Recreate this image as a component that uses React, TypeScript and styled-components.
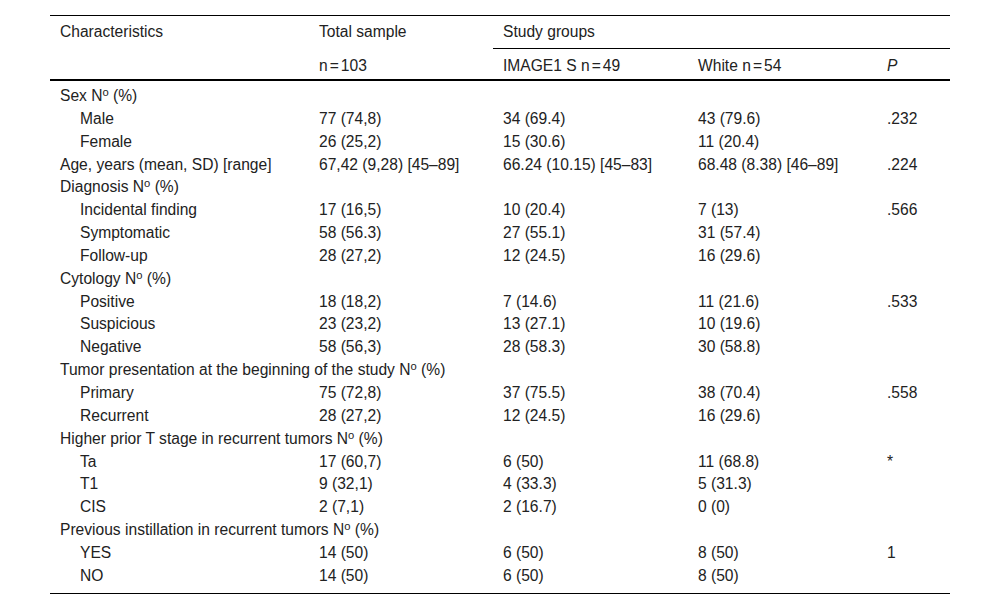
import React from "react";
import styled, { createGlobalStyle } from "styled-components";

// Page reset: white page, Arial-metric sans font
const GlobalStyle = createGlobalStyle`
  html, body {
    margin: 0;
    padding: 0;
    background: #ffffff;
  }
  body {
    font-family: "Liberation Sans", Arial, Helvetica, sans-serif;
    color: #222;
  }
`;

const Page = styled.div`
  padding: 15px 50px 0 50px;
`;

const Table = styled.table`
  width: 900px;
  border-collapse: collapse;
  table-layout: fixed;
  border-top: 1px solid #000;
  border-bottom: 1px solid #000;
  font-size: 15.6px;
  line-height: 19px;
`;

// Header cells
const Th = styled.th<{ $underline?: boolean; $italic?: boolean }>`
  text-align: left;
  font-weight: normal;
  font-style: ${(p) => (p.$italic ? "italic" : "normal")};
  padding: 6px 10px 7px 10px;
  white-space: nowrap;
  border-bottom: ${(p) => (p.$underline ? "1px solid #000" : "none")};
`;

const SubHeadRow = styled.tr`
  border-bottom: 2px solid #000;

  th {
    padding-top: 7px;
    padding-bottom: 4px;
  }
`;

const Body = styled.tbody`
  tr:first-child td {
    padding-top: 6px;
  }
  tr:last-child td {
    padding-bottom: 7px;
  }
`;

// Body cells, indented when the row is a sub-item of a group
const Td = styled.td<{ $indent?: boolean }>`
  padding: 2px 10px 2px ${(p) => (p.$indent ? "30px" : "10px")};
  line-height: 18.85px;
  white-space: nowrap;
  vertical-align: top;
`;

const Sup = styled.sup`
  font-size: 0.72em;
  line-height: 0;
  vertical-align: 0.45em;
`;

// tightly set equals sign in "n = 49"
const Eq = styled.span`
  padding: 0 2px;
`;

const No = () => (
  <>
    N<Sup>o</Sup>
  </>
);

const Count: React.FC<{ prefix?: string; n: number }> = ({ prefix = "", n }) => (
  <>
    {prefix}n<Eq>=</Eq>
    {n}
  </>
);

type Row =
  | { kind: "group"; label: React.ReactNode }
  | {
      kind: "item" | "plain";
      label: string;
      total: string;
      a: string;
      b: string;
      p?: string;
    };

const rows: Row[] = [
  { kind: "group", label: <>Sex <No /> (%)</> },
  { kind: "item", label: "Male", total: "77 (74,8)", a: "34 (69.4)", b: "43 (79.6)", p: ".232" },
  { kind: "item", label: "Female", total: "26 (25,2)", a: "15 (30.6)", b: "11 (20.4)" },
  {
    kind: "plain",
    label: "Age, years (mean, SD) [range]",
    total: "67,42 (9,28) [45–89]",
    a: "66.24 (10.15) [45–83]",
    b: "68.48 (8.38) [46–89]",
    p: ".224",
  },
  { kind: "group", label: <>Diagnosis <No /> (%)</> },
  { kind: "item", label: "Incidental finding", total: "17 (16,5)", a: "10 (20.4)", b: "7 (13)", p: ".566" },
  { kind: "item", label: "Symptomatic", total: "58 (56.3)", a: "27 (55.1)", b: "31 (57.4)" },
  { kind: "item", label: "Follow-up", total: "28 (27,2)", a: "12 (24.5)", b: "16 (29.6)" },
  { kind: "group", label: <>Cytology <No /> (%)</> },
  { kind: "item", label: "Positive", total: "18 (18,2)", a: "7 (14.6)", b: "11 (21.6)", p: ".533" },
  { kind: "item", label: "Suspicious", total: "23 (23,2)", a: "13 (27.1)", b: "10 (19.6)" },
  { kind: "item", label: "Negative", total: "58 (56,3)", a: "28 (58.3)", b: "30 (58.8)" },
  { kind: "group", label: <>Tumor presentation at the beginning of the study <No /> (%)</> },
  { kind: "item", label: "Primary", total: "75 (72,8)", a: "37 (75.5)", b: "38 (70.4)", p: ".558" },
  { kind: "item", label: "Recurrent", total: "28 (27,2)", a: "12 (24.5)", b: "16 (29.6)" },
  { kind: "group", label: <>Higher prior T stage in recurrent tumors <No /> (%)</> },
  { kind: "item", label: "Ta", total: "17 (60,7)", a: "6 (50)", b: "11 (68.8)", p: "*" },
  { kind: "item", label: "T1", total: "9 (32,1)", a: "4 (33.3)", b: "5 (31.3)" },
  { kind: "item", label: "CIS", total: "2 (7,1)", a: "2 (16.7)", b: "0 (0)" },
  { kind: "group", label: <>Previous instillation in recurrent tumors <No /> (%)</> },
  { kind: "item", label: "YES", total: "14 (50)", a: "6 (50)", b: "8 (50)", p: "1" },
  { kind: "item", label: "NO", total: "14 (50)", a: "6 (50)", b: "8 (50)" },
];

const App: React.FC = () => {
  return (
    <Page>
      <GlobalStyle />
      <Table>
        <colgroup>
          <col style={{ width: 259 }} />
          <col style={{ width: 184 }} />
          <col style={{ width: 195 }} />
          <col style={{ width: 189 }} />
          <col style={{ width: 73 }} />
        </colgroup>
        <thead>
          <tr>
            <Th>Characteristics</Th>
            <Th>Total sample</Th>
            <Th colSpan={3} $underline>
              Study groups
            </Th>
          </tr>
          <SubHeadRow>
            <Th />
            <Th>
              <Count n={103} />
            </Th>
            <Th>
              <Count prefix="IMAGE1 S " n={49} />
            </Th>
            <Th>
              <Count prefix="White " n={54} />
            </Th>
            <Th $italic>P</Th>
          </SubHeadRow>
        </thead>
        <Body>
          {rows.map((r, i) =>
            r.kind === "group" ? (
              <tr key={i}>
                <Td colSpan={5}>{r.label}</Td>
              </tr>
            ) : (
              <tr key={i}>
                <Td $indent={r.kind === "item"}>{r.label}</Td>
                <Td>{r.total}</Td>
                <Td>{r.a}</Td>
                <Td>{r.b}</Td>
                <Td>{r.p ?? ""}</Td>
              </tr>
            )
          )}
        </Body>
      </Table>
    </Page>
  );
};

export default App;
